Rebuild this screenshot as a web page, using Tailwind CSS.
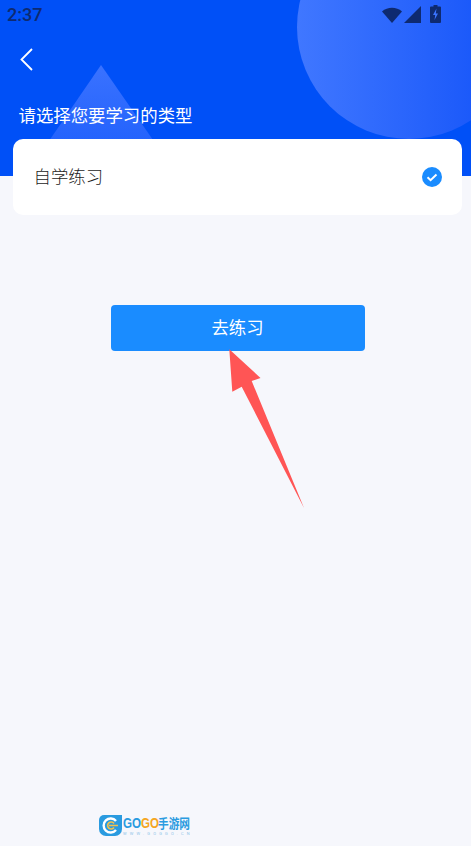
<!DOCTYPE html>
<html lang="zh">
  <head>
    <meta charset="UTF-8" />
    <meta name="viewport" content="width=device-width, initial-scale=1.0" />
    <title>选择类型</title>
    <script src="https://cdn.jsdelivr.net/npm/@tailwindcss/browser@4"></script>
  </head>

  <body>
    <div class="relative w-[471px] h-[846px] overflow-hidden bg-[#f6f7fc] font-['Roboto','Noto_Sans_CJK_SC',sans-serif]">
      <!-- Blue header -->
      <div class="relative h-[176px] overflow-hidden bg-[#0050f7]">
        <div class="absolute left-[297px] top-[-85px] w-[224px] h-[224px] rounded-full bg-gradient-to-r from-[#4077ff] to-[#0f50f8]"></div>
        <svg class="absolute left-0 top-0" width="200" height="176" viewBox="0 0 200 176">
          <defs>
            <linearGradient id="tri" x1="0" y1="0" x2="0" y2="1">
              <stop offset="0" stop-color="#3a72ff" />
              <stop offset="1" stop-color="#1a5cfb" />
            </linearGradient>
          </defs>
          <path d="M101 65 L178 176 L25 176 Z" fill="url(#tri)" />
        </svg>

        <!-- Status bar -->
        <div class="relative flex items-center justify-between h-[28px] pl-[7px] pr-[30px] text-[#0e2a70]">
          <span class="mt-[2px] text-[18px] font-medium leading-[30px]">2:37</span>
          <div class="flex items-center">
            <svg class="mr-[2px]" width="20" height="17" viewBox="0 0 20 17"><path d="M0 5.5 C5.5 0.5 14.5 0.5 20 5.5 L10 17 Z" fill="currentColor" /></svg>
            <svg class="mr-[9px]" width="17" height="17" viewBox="0 0 17 17"><path d="M17 0 V17 H0 Z" fill="currentColor" /></svg>
            <svg width="11" height="18" viewBox="0 0 11 18">
              <path d="M3.5 0 H7.5 V1.5 H10 A1 1 0 0 1 11 2.5 V17 A1 1 0 0 1 10 18 H1 A1 1 0 0 1 0 17 V2.5 A1 1 0 0 1 1 1.5 H3.5 Z" fill="currentColor" />
              <path d="M6.5 3.5 L3 10 H5.2 L4.5 15 L8 8.5 H5.8 Z" fill="#3b74ff" />
            </svg>
          </div>
        </div>

        <!-- Back arrow -->
        <div class="relative pl-[20px] pt-[20px]">
          <svg width="13" height="23" viewBox="0 0 13 23" fill="none" stroke="#fff" stroke-width="1.8">
            <path d="M12 1 L1.5 11.5 L12 22" />
          </svg>
        </div>

        <p class="relative mt-[33px] pl-[18.5px] text-[17.4px] leading-[24px] text-white">请选择您要学习的类型</p>
      </div>

      <!-- Option card -->
      <div class="relative ml-[13px] mt-[-37px] flex h-[76px] w-[449px] items-center justify-between rounded-[10px] bg-white pl-[20.5px] pr-[20px]">
        <span class="mt-[1px] text-[17.4px] font-light text-[#1c1c1c]">自学练习</span>
        <svg width="20" height="20" viewBox="0 0 20 20">
          <circle cx="10" cy="10" r="10" fill="#1a8cff" />
          <path d="M5.5 10.3 L8.6 13.2 L14.5 7.6" fill="none" stroke="#fff" stroke-width="2" />
        </svg>
      </div>

      <!-- Go button -->
      <button class="ml-[111px] mt-[90px] block h-[46px] w-[254px] rounded-[4px] bg-[#1a8cff] pr-[1px] text-[17.4px] text-white">去练习</button>

      <!-- Annotation arrow -->
      <svg class="absolute left-[225px] top-[345px]" width="85" height="167" viewBox="225 345 85 167">
        <path d="M229.3 349.3 L260.5 378 L251.7 381 L304 508 L241.7 386.7 L232.3 391.7 Z" fill="#ff5555" />
      </svg>

      <!-- Watermark logo -->
      <div class="absolute left-[99px] top-[815px] flex items-start gap-[1px]">
        <svg width="23" height="21" viewBox="0 0 23 21">
          <path d="M5 0 H23 V14 A7 7 0 0 1 16 21 H7 A7 7 0 0 1 0 14 V5 A5 5 0 0 1 5 0 Z" fill="#2a9be0" />
          <path d="M17 6 A7 7 0 1 0 17 15" fill="none" stroke="#fff" stroke-width="2.4" />
          <path d="M15 8.5 A3.5 3.5 0 1 0 15 12.5 M10 10.5 H19" fill="none" stroke="#f5c04a" stroke-width="1.6" />
        </svg>
        <div class="flex w-[68px] flex-col">
          <div class="mt-[1px] flex h-[15px] items-center font-['Liberation_Sans','Noto_Sans_CJK_SC',sans-serif] font-bold leading-none">
            <span class="w-[35px] shrink-0 origin-left scale-x-[0.8] whitespace-nowrap text-[14.5px]"><span class="text-[#2a9be0]">GO</span><span class="text-[#f5a623]">GO</span></span>
            <span class="shrink-0 origin-left scale-x-[0.82] whitespace-nowrap text-[13px] text-[#2a9be0]">手游网</span>
          </div>
          <span class="mt-[1px] whitespace-nowrap text-[4px] leading-[4px] tracking-[3.2px] text-[#8fc4e8]">WWW.GOGGO.CN</span>
        </div>
      </div>
    </div>
  </body>
</html>
